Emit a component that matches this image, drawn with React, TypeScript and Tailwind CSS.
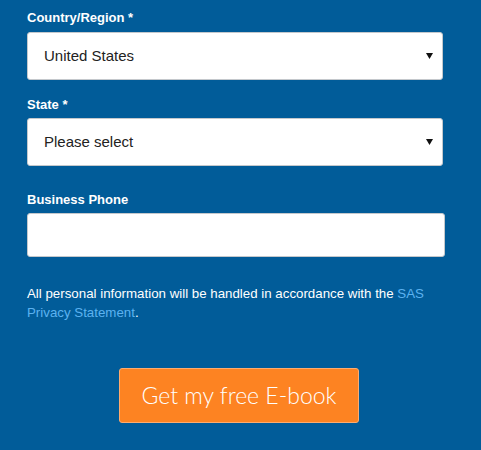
import React from "react";

function Caret() {
  return (
    <svg width="7" height="6" viewBox="0 0 7 6" className="shrink-0">
      <path d="M0 0 L7 0 L3.5 6 Z" fill="#111" />
    </svg>
  );
}

function SelectBox({ value }: { value: string }) {
  return (
    <div className="flex h-[48px] w-[416px] items-center justify-between rounded-[3px] border border-[#c4c8cc] bg-white pl-[16px] pr-[9px] text-[15px] text-[#222]">
      <span>{value}</span>
      <Caret />
    </div>
  );
}

export default function App() {
  return (
    <div
      className="min-h-[450px] w-[481px] bg-[#015c99] text-white"
      style={{ fontFamily: '"Liberation Sans", Arial, sans-serif' }}
    >
      <div className="px-[27px] pt-[10px]">
        <div className="mb-[6px] text-[13px] font-bold leading-[16px]">Country/Region *</div>
        <SelectBox value="United States" />
        <div className="mb-[5px] mt-[17px] text-[13px] font-bold leading-[16px]">State *</div>
        <SelectBox value="Please select" />
        <div className="mb-[5px] mt-[26px] text-[13px] font-bold leading-[16px]">Business Phone</div>
        <div className="h-[44px] w-[418px] rounded-[3px] border border-[#c4c8cc] bg-white" />
        <p className="mt-[27px] w-[418px] text-[13.3px] leading-[19px]">
          All personal information will be handled in accordance with the{" "}
          <span className="text-[#5cb2f0]">SAS Privacy Statement</span>.
        </p>
      </div>
      <div className="mt-[46px] flex justify-center pr-[3px]">
        <div
          className="flex h-[55px] w-[240px] items-center justify-center rounded-[3px] border border-[#ffab6e] bg-[#fd8322] text-[23px] font-light text-white"
          style={{ fontFamily: 'Lato, "Open Sans", sans-serif' }}
        >
          Get my free E-book
        </div>
      </div>
    </div>
  );
}
